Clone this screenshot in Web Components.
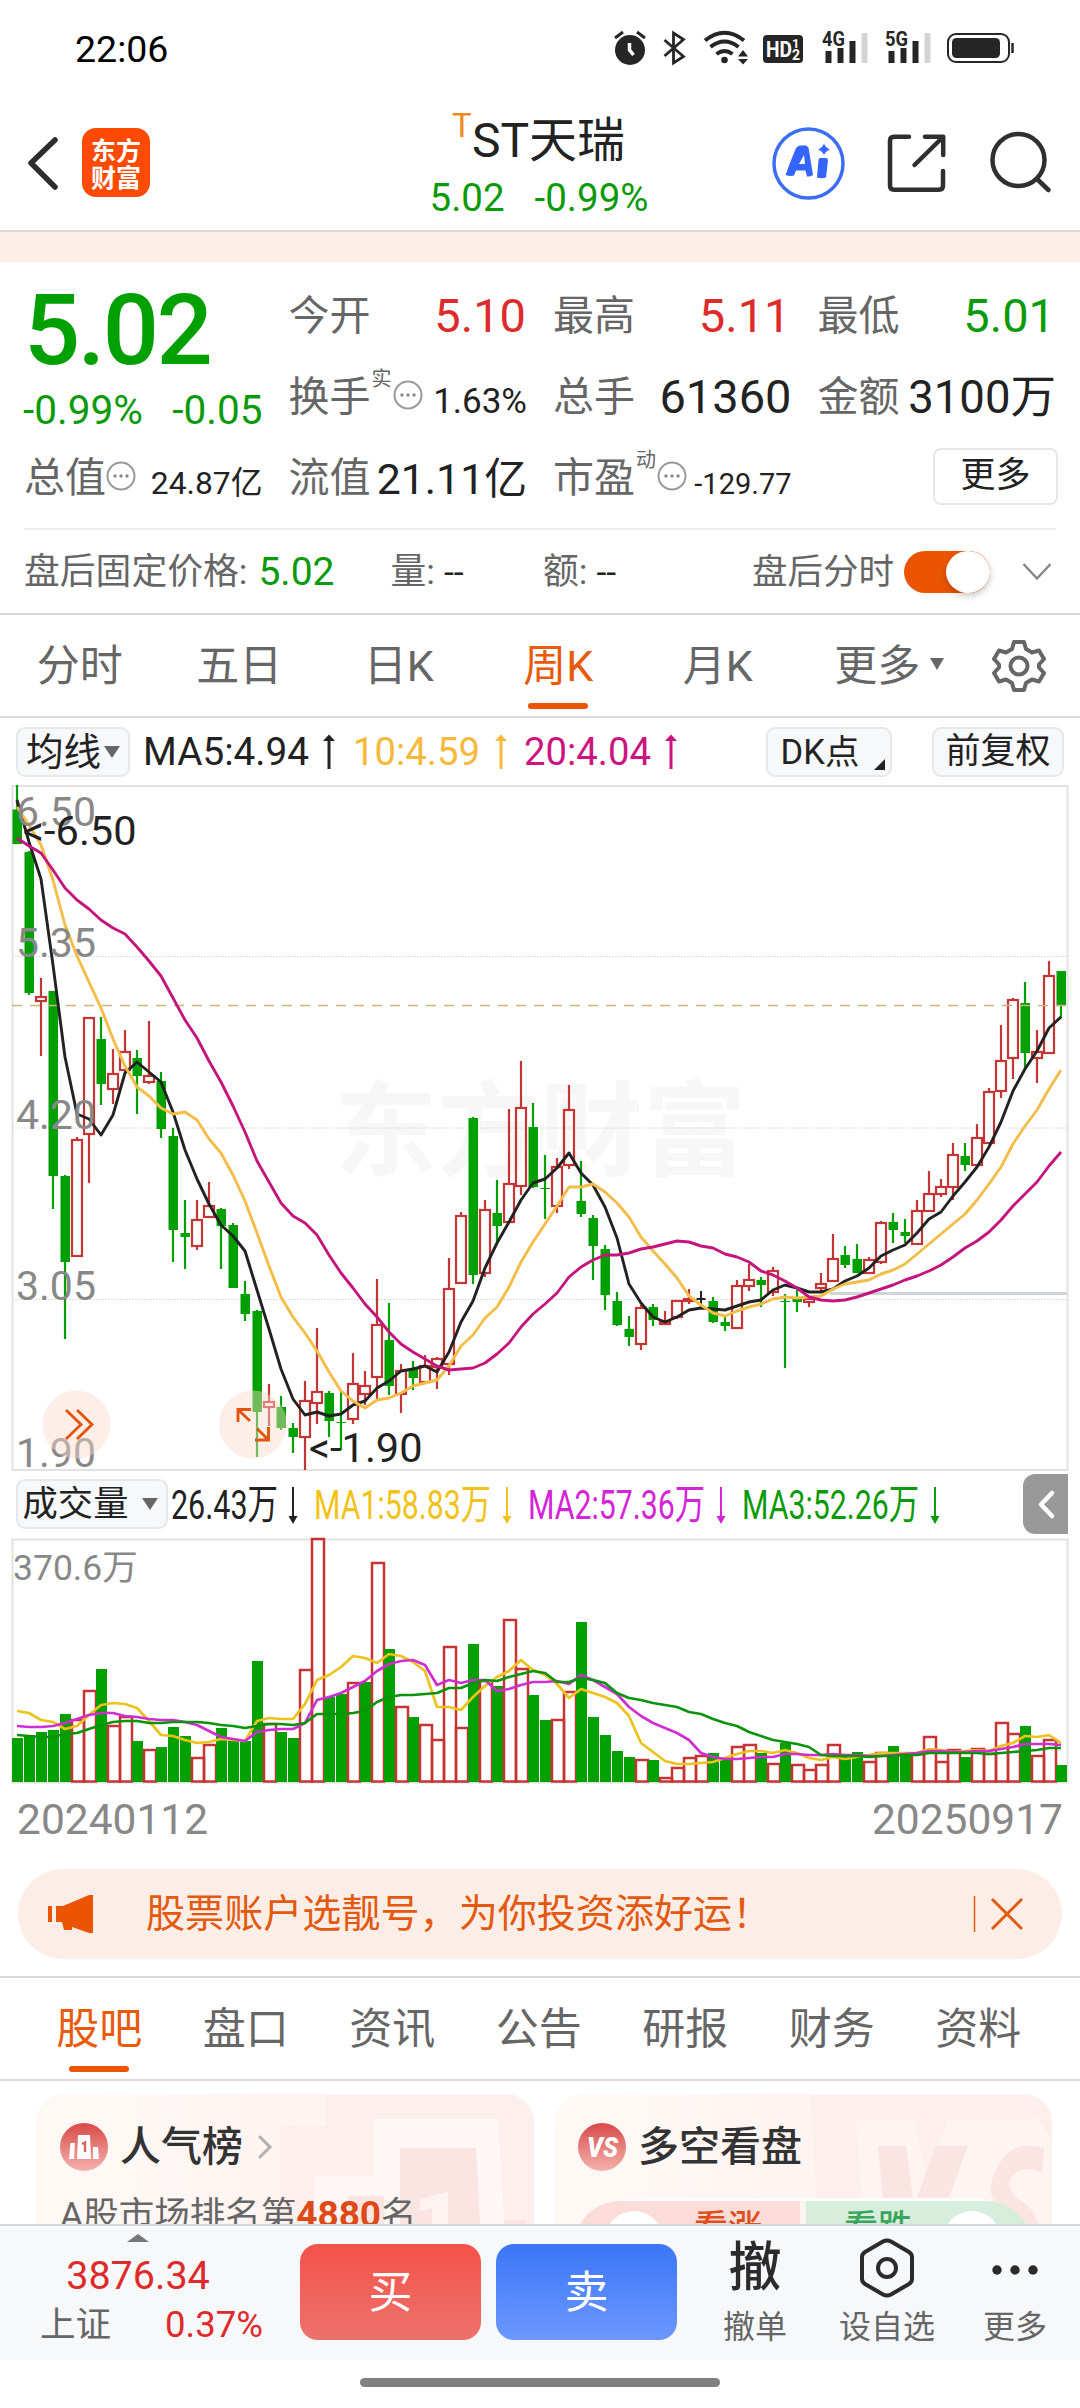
<!DOCTYPE html>
<html lang="zh-CN">
<head>
<meta charset="utf-8">
<title>ST天瑞</title>
<style>
    body {
        margin: 0;
        width: 1080px;
        height: 2408px;
        overflow: hidden;
        background: #fff;
        color: #222;
        font-family: Roboto, "Noto Sans CJK SC", sans-serif;
    }
</style>
</head>
<body>
<stock-app></stock-app>

<script>
//small helper: every component clones its own template
function define(name, html, setup) {
    const template = document.createElement("template")
    template.innerHTML = html
    customElements.define(name, class extends HTMLElement {
        constructor() {
            super();
            this.attachShadow({mode: "open"})
            this.shadowRoot.append(template.content.cloneNode(true))
        }
        connectedCallback() {
            if (setup) setup(this, this.shadowRoot);
        }
    })
}

//#region HEADER
define("status-bar", /*html*/`
    <style>
    :host { display: flex; height: 98px; box-sizing: border-box; padding: 0 64px 0 75px; align-items: center; justify-content: space-between; color: #000; font-size: 37.5px; line-height: 44px; }
    svg { display: block; overflow: visible; }
    </style>
    <span>22:06</span>
    <svg width="405" height="40" viewBox="612 29 405 40" fill="none" stroke="#262626">
      <circle cx="631" cy="50" r="15" fill="#262626" stroke="none"/>
      <path d="M616 38l8-6M646 38l-8-6" stroke-width="3"/>
      <path d="M630.500 43v7l4 5" stroke="#fff" stroke-width="3.500"/>
      <path d="M665.500 40L684.500 56.500 674.500 63V33L684.500 39.500 665.500 56" stroke-width="2.800"/>
      <path d="M706 40.500q19.500-15.500 39 0M711.500 47q14-11 28 0M717.500 54q8-6 16 0" stroke-width="4"/>
      <circle cx="725.500" cy="60" r="3.300" fill="#262626" stroke="none"/>
      <path d="M739 56.500l5-6.500 5 6.500zM739 59h10l-5 5.500z" fill="#262626" stroke="none"/>
      <rect x="764" y="35" width="40" height="28" rx="4" fill="#262626" stroke="none"/>
      <g fill="#fff" stroke="none" font-family="Roboto" font-weight="700">
        <text x="767" y="57" font-size="22" textLength="26" lengthAdjust="spacingAndGlyphs">HD</text>
        <text x="793" y="48" font-size="13" textLength="7">1</text><text x="793" y="60" font-size="14">2</text>
      </g>
      <g fill="#262626" stroke="none" font-family="Roboto" font-weight="700" font-size="20">
        <text x="823" y="46" textLength="23" lengthAdjust="spacingAndGlyphs">4G</text>
        <text x="886" y="46" textLength="23" lengthAdjust="spacingAndGlyphs">5G</text>
      </g>
      <g fill="#262626" stroke="none">
        <path d="M826.500 51h6v12h-6zM838.500 48h6v15h-6zM850.500 41h6v22h-6zM889.500 51h6v12h-6zM901.500 48h6v15h-6zM913.500 41h6v22h-6z"/>
        <path d="M862.500 33h6v30h-6zM925.500 33h6v30h-6z" fill="#d4d4d4"/>
      </g>
      <rect x="949" y="34" width="61" height="28" rx="8" stroke-width="2"/>
      <rect x="953" y="38" width="48" height="20" rx="4.500" fill="#262626" stroke="none"/>
      <path d="M1013.500 43v10" stroke-width="2.500"/>
    </svg>
`)

define("stock-header", /*html*/`
    <style>
    :host { display: grid; grid-template-columns: 400px 1fr 400px; height: 132px; border-bottom: 2px solid #d9d9d9; box-sizing: border-box; margin-top: 2px; }
    .left, .right { display: flex; align-items: center; }
    .left { padding: 0 0 5px 26px; gap: 22px; }
    .logo { width: 68px; height: 69px; border-radius: 14px; background: #ff4a03; color: #fff; font: 700 25px/27px "Noto Sans CJK SC", sans-serif; display: flex; align-items: center; justify-content: center; text-align: center; }
    .title { display: flex; flex-direction: column; align-items: center; }
    .name { display: flex; white-space: nowrap; font-size: 48px; line-height: 56px; margin-top: 13px; margin-left: -3px; }
    sup { font-size: 33px; line-height: 34px; color: #ef8a1d; margin-top: -4px; width: 20px; }
    .price { display: flex; gap: 30px; font-size: 38.500px; line-height: 46px; margin-top: 6px; margin-left: -2px; color: #0a9a0a; white-space: nowrap; }
    </style>
    <div class="left">
      <svg width="34" height="54" fill="none" stroke="#2d2d2d" stroke-width="5.500" stroke-linecap="round" stroke-linejoin="round"><path d="M29 4L5 27l24 24"/></svg>
      <div class="logo">东方<br>财富</div>
    </div>
    <div class="title">
      <div class="name"><sup>T</sup>ST天瑞</div>
      <div class="price"><span>5.02</span><span>-0.99%</span></div>
    </div>
    <svg class="right" width="400" height="127" viewBox="680 100 400 127" fill="none">
      <circle cx="808.500" cy="163.500" r="34.500" stroke="#3d6df2" stroke-width="3.500"/>
      <g fill="#3565ff">
        <path d="M785.500 175q5-14 10.500-27 2-2.500 4-2.500h6l2.500 2 4.500 27.500q-3 2-6 1.500l-1.500-6h-9.500l-2 5q-4 1-8.500-.5zM799 164h6l-1-9z" fill-rule="evenodd"/>
        <path d="M818.500 160q0-2 2-2h5q2.500 0 2.500 2l-2 17.500q-5 1.500-9 0z"/>
        <path d="M824 143.500q1.500 4 6 6-4.500 1.500-6 5.500-1.500-4-6-5.500 4.500-2 6-6z"/>
      </g>
      <g stroke="#2f2f2f" stroke-width="4.500" stroke-linecap="round" stroke-linejoin="round">
        <path d="M909 136.800h-15q-4 0-4 4v45q0 4 4 4h45q4 0 4-4V171M925 136.800h18.200V155M942 138L914.500 165"/>
        <circle cx="1018.500" cy="160" r="26"/><path d="M1037 179l11.500 11"/>
      </g>
    </svg>
`)
//#endregion HEADER

//#region QUOTE
define("quote-cell", /*html*/`
    <style>
    :host { display: flex; height: 81px; align-items: center; justify-content: space-between; white-space: nowrap; font-size: 47px; line-height: 1.2; color: #222; }
    .label { display: flex; align-items: center; font-size: 41px; color: #666; }
    .mark { align-self: flex-start; font-size: 20px; line-height: 24px; margin-top: -18px; width: 22px; padding-left: 1px; box-sizing: border-box; }
    svg { display: none; margin-top: -5px; }
    :host([info]) svg { display: block; }
    .tip { display: flex; width: 0; }
    :host([info]) .tip { width: 52px; }
    :host([info]:not([mark])) .tip { width: 31px; }
    </style>
    <span class="label"><slot name="label"></slot><span class="tip"><span class="mark"></span><svg width="30" height="30" fill="none" stroke="#999" stroke-width="2"><circle cx="15" cy="15" r="13.500"/><g fill="#888" stroke="none"><circle cx="9" cy="15" r="1.700"/><circle cx="15" cy="15" r="1.700"/><circle cx="21" cy="15" r="1.700"/></g></svg></span></span>
    <span><slot></slot></span>
`, (el, root) => {
    const mark = root.querySelector(".mark")
    if (el.hasAttribute("mark")) mark.textContent = el.getAttribute("mark")
    else mark.remove()
})

define("quote-panel", /*html*/`
    <style>
    :host { display: block; height: 383px; border-bottom: 2px solid #d9d9d9; box-sizing: border-box; border-top: 30px solid #fceee6; }
    .grid { display: grid; grid-template-columns: repeat(4, 238.500px); column-gap: 26px; grid-template-rows: repeat(3, 81px); margin: 0 24px; padding: 14px 0 9px; border-bottom: 2px solid #ececec; height: 243px; }
    .last { grid-row: span 2; color: #0a9a0a; }
    .last b { display: block; font-weight: 500; font-size: 99px; line-height: 108px; letter-spacing: -2.500px; color: #00a000; }
    .last div { display: flex; justify-content: space-between; font-size: 40.500px; line-height: 46px; margin-top: 3px; margin-left: -1px; white-space: nowrap; }
    .up { --c: #dd2b2b; } .down { --c: #0a9a0a; }
    .up, .down { color: var(--c); margin-right: 1px; }
    .more { justify-self: end; align-self: center; width: 121px; height: 53px; border: 2px solid #e6e6e6; border-radius: 8px; font-size: 35px; line-height: 52px; text-align: center; margin: 0 -2px 4px 0; }
    .after { display: flex; align-items: center; height: 84px; margin: 0 24px; font-size: 35.800px; line-height: 44px; color: #666; white-space: nowrap; padding-right: 4px; }
    .after .down { font-size: 39px; margin: 0 56px 0 11px; }
    .after i { font-style: normal; color: #222; width: 90px; padding-left: 9px; }
    .after .r { margin-left: auto; font-size: 35.500px; }
    .switch { width: 86px; height: 42px; border-radius: 21px; background: #eb5502; display: flex; justify-content: flex-end; margin: 0 32px 0 10px; }
    .switch::after { content: ""; width: 44px; height: 42px; border-radius: 50%; background: #fff; box-shadow: 0 3px 7px rgba(0,0,0,.22); }
    </style>
    <div class="grid">
      <div class="last"><b>5.02</b><div><span>-0.99%</span><span>-0.05</span></div></div>
      <quote-cell><span slot="label">今开</span><span class="up">5.10</span></quote-cell>
      <quote-cell><span slot="label">最高</span><span class="up">5.11</span></quote-cell>
      <quote-cell><span slot="label">最低</span><span class="down">5.01</span></quote-cell>
      <quote-cell info mark="实"><span slot="label">换手</span><span style="font-size:35px">1.63%</span></quote-cell>
      <quote-cell><span slot="label">总手</span><span>61360</span></quote-cell>
      <quote-cell><span slot="label">金额</span><span style="font-size:45.500px">3100万</span></quote-cell>
      <quote-cell info><span slot="label">总值</span><span style="font-size:31.800px">24.87亿</span></quote-cell>
      <quote-cell><span slot="label">流值</span><span style="font-size:42.800px">21.11亿</span></quote-cell>
      <quote-cell info mark="动"><span slot="label">市盈</span><span style="font-size:29px">-129.77</span></quote-cell>
      <div class="more">更多</div>
    </div>
    <div class="after">
      <span>盘后固定价格:</span><span class="down">5.02</span>
      <span>量:</span><i>--</i><span style="margin-left:9px">额:</span><i>--</i>
      <span class="r">盘后分时</span><span class="switch"></span>
      <svg width="30" height="20" fill="none" stroke="#888" stroke-width="2.500"><path d="M1.500 2L15 16.500 28.500 2"/></svg>
    </div>
`)
//#endregion QUOTE

//#region TABS
define("tab-item", /*html*/`
    <style>
    :host { display: flex; flex: none; width: var(--tab, 160px); align-items: center; justify-content: center; position: relative; font-size: 43px; color: #666; white-space: nowrap; }
    :host([active]) { color: #e85a0c; }
    :host([active])::after { content: ""; position: absolute; bottom: 7px; left: calc(50% - 30px); width: 60px; height: 6px; border-radius: 3px; background: #eb5502; }
    </style>
    <slot></slot>
`)

define("tab-strip", /*html*/`
    <style>
    :host { display: flex; height: 103px; box-sizing: border-box; border-bottom: 2px solid #d9d9d9; line-height: 60px; }
    </style>
    <slot></slot>
`)
//#endregion TABS

//#region CHARTS
define("chip-button", /*html*/`
    <style>
    :host { display: flex; box-sizing: border-box; height: 50px; border: 2px solid #e6e8ea; border-radius: 9px; background: #f7f8fa; align-items: center; justify-content: center; font-size: 37px; line-height: 44px; white-space: nowrap; position: relative; }
    :host([arrow])::after { content: ""; border: solid transparent; border-width: 12px 8px 0; border-top-color: #666; margin-left: var(--gap, 4px); }
    :host([corner])::after { content: ""; position: absolute; right: 5px; bottom: 5px; border-bottom: 11px solid #222; border-left: 11px solid transparent; }
    </style>
    <slot></slot>
`)

define("ma-legend", /*html*/`
    <style>
    :host { display: flex; height: 67px; padding: 0 16px; align-items: center; box-sizing: border-box; }
    svg { display: block; flex: 1; height: 66px; }
    </style>
    <chip-button arrow style="width:114px;font-size:37.500px;--gap:3px">均线</chip-button>
    <svg viewBox="130 0 636 66" preserveAspectRatio="xMinYMid" font-size="38" font-family="Roboto"></svg>
    <chip-button corner style="width:126px;margin-right:40px;padding-right:18px;font-size:34.500px">DK点</chip-button>
    <chip-button style="width:132px;font-size:35px">前复权</chip-button>
`, (el, root) => {
    root.querySelector("svg").innerHTML = [
        ["MA5:4.94", 143, 166, 329, "#222"],
        ["10:4.59", 353, 127, 501, "#f6b93b"],
        ["20:4.04", 524, 127, 671, "#cc1480"]
    ].map(([t, x, w, a, c]) => `<g fill="${c}"><text x="${x}" y="46" textLength="${w}" lengthAdjust="spacingAndGlyphs">${t}</text><path d="M${a - 1.5} 50V22h-4.500l6-6.500 6 6.500h-4.500V50z"/></g>`).join("")
})

define("volume-legend", /*html*/`
    <style>
    :host { display: flex; height: 66px; padding: 0 12px 0 16px; align-items: center; box-sizing: border-box; }
    svg { display: block; }
    .lines { flex: 1; height: 66px; }
    .fold { width: 45px; height: 60px; background: #999; border-radius: 12px 0 0 12px; margin-bottom: 1px; }
    </style>
    <chip-button arrow style="width:152px;font-size:35.300px;padding-right:3px;--gap:14px">成交量</chip-button>
    <svg class="lines" viewBox="168 0 855 66" font-size="41" font-family='Roboto, "Noto Sans CJK SC"'></svg>
    <svg class="fold" viewBox="0 0 45 60" fill="none" stroke="#fff" stroke-width="4.500" stroke-linecap="round" stroke-linejoin="round"><path d="M29 19L18 30.500 29 42"/></svg>
`, (el, root) => {
    root.querySelector("svg").innerHTML = [
        ["26.43万", 171, 107, 293, "#222"],
        ["MA1:58.83万", 314, 177, 507, "#f2c21a"],
        ["MA2:57.36万", 528, 177, 721, "#d424d8"],
        ["MA3:52.26万", 742, 177, 935, "#0a9a0a"]
    ].map(([t, x, w, a, c]) => `<g fill="${c}"><text x="${x}" y="48" textLength="${w}" lengthAdjust="spacingAndGlyphs">${t}</text><path d="M${a - 1} 16v29h-3.500l4.500 8 4.500-8h-3.500V16z"/></g>`).join("")
})

const RED = "#c63535", GREEN = "#00a000"
const centre = i => 17 + i * 12
const polyline = (ys, colour, width) => `<polyline points="${ys.map((y, i) => centre(i) + "," + y).join(" ")}" stroke="${colour}" stroke-width="${width}" fill="none" stroke-linejoin="round"/>`

//one entry per week: direction, high, low, body top, body bottom
const candles = `
G 785 844 809.5 844|G 851 995 852 993|R 978 1056 997 1001|G 991 1209 991 1176|G 1175 1339 1176 1262|R 1137 1257 1140 1256|R 1017 1183 1018 1134|G 1017 1105 1039 1084
R 1049 1104 1074 1089|R 1030 1072 1052 1070|G 1050 1114 1058 1076|R 1021 1084 1076 1082|G 1072 1138 1081 1129|G 1128 1262 1136 1230|G 1200 1269 1233 1237|R 1200 1250 1220 1246
R 1182 1218 1206 1217|G 1208 1269 1209 1226|G 1223 1288 1225 1288|G 1281 1321 1294 1314|G 1310 1457 1311 1412|R 1384 1426 1402 1407|G 1396 1430 1407 1428|G 1423 1453 1428 1437
R 1381 1470 1401 1437|R 1328 1424 1392 1403|G 1391 1437 1393 1421|G 1391 1450 1422 1423|R 1353 1424 1384 1419|R 1371 1405 1386 1394|R 1279 1399 1325 1377|G 1303 1395 1340 1386
R 1364 1413 1371 1394|G 1361 1390 1369 1378|R 1355 1384 1366 1382|R 1357 1389 1359 1367|R 1258 1375 1289 1364|R 1212 1283 1216 1283|G 1117 1284 1118 1275|R 1200 1277 1210 1273
G 1180 1242 1213 1226|R 1109 1222 1184 1222|R 1061 1195 1108 1186|G 1103 1188 1127 1187|G 1155 1219 1188 1189|R 1158 1213 1167 1206|R 1085 1169 1110 1165|G 1161 1217 1201 1214
G 1215 1280 1218 1246|G 1245 1310 1249 1295|G 1292 1326 1301 1325|G 1316 1346 1329 1337|R 1305 1350 1308 1344|G 1304 1326 1307 1320|R 1311 1324 1322 1324|R 1300 1319 1301 1317
R 1289 1304 1299 1301|K 1291 1308 1299 1300|G 1297 1323 1301 1322|G 1315 1331 1322 1326|R 1280 1328 1286 1328|R 1264 1291 1280 1286|G 1277 1307 1280 1285|R 1267 1296 1271 1292
G 1294 1368 1301 1302|G 1290 1312 1298 1302|R 1296 1307 1299 1302|R 1273 1292 1284 1288|R 1234 1282 1259 1281|G 1246 1268 1255 1265|G 1244 1273 1259 1273|R 1257 1273 1260 1273
R 1221 1264 1223 1262|G 1213 1243 1222 1230|G 1219 1243 1232 1236|R 1200 1245 1211 1244|R 1171 1212 1194 1211|R 1179 1197 1187 1194|R 1143 1200 1155 1187|G 1143 1171 1156 1165
R 1124 1166 1138 1165|R 1088 1143 1092 1143|R 1025 1098 1061 1091|R 998 1079 1000 1058|G 982 1069 1003 1053|R 1030 1083 1052 1058|R 961 1053 976 1053|G 971 1018 971 1005
`.trim().split(/[|\n]/).map(row => row.split(" ").map((v, i) => i ? +v : v))

const ma5 = [800, 842, 879, 965, 1057, 1114, 1119, 1135, 1115, 1073, 1062, 1072, 1082, 1112, 1150, 1179, 1204, 1225, 1236, 1251, 1290, 1329, 1369, 1399, 1415, 1412, 1416, 1414, 1405, 1401, 1388, 1381, 1371, 1369, 1366, 1372, 1352, 1322, 1301, 1268, 1243, 1222, 1200, 1183, 1179, 1168, 1153, 1173, 1185, 1207, 1238, 1284, 1303, 1317, 1322, 1317, 1310, 1308, 1309, 1310, 1306, 1302, 1300, 1290, 1285, 1288, 1292, 1292, 1289, 1281, 1276, 1268, 1256, 1250, 1245, 1233, 1219, 1212, 1196, 1182, 1167, 1147, 1122, 1091, 1069, 1051, 1028, 1017]
const ma10 = [807, 825, 845, 880, 925, 956, 982, 1008, 1039, 1066, 1087, 1096, 1108, 1114, 1112, 1120, 1139, 1153, 1175, 1201, 1233, 1266, 1297, 1317, 1333, 1351, 1372, 1391, 1401, 1408, 1400, 1398, 1393, 1386, 1383, 1380, 1366, 1346, 1335, 1318, 1307, 1287, 1262, 1242, 1224, 1206, 1187, 1187, 1184, 1192, 1203, 1217, 1237, 1251, 1264, 1278, 1296, 1305, 1313, 1316, 1311, 1307, 1304, 1299, 1297, 1298, 1297, 1296, 1289, 1284, 1282, 1280, 1274, 1270, 1264, 1254, 1244, 1234, 1224, 1214, 1200, 1184, 1167, 1144, 1126, 1110, 1089, 1070]
const ma20 = [838, 846, 853, 870, 888, 900, 909, 920, 928, 934, 947, 961, 976, 998, 1020, 1038, 1061, 1082, 1106, 1132, 1161, 1182, 1203, 1216, 1223, 1235, 1255, 1273, 1288, 1304, 1317, 1332, 1344, 1352, 1359, 1366, 1370, 1369, 1368, 1363, 1354, 1343, 1327, 1314, 1304, 1293, 1277, 1267, 1260, 1255, 1255, 1253, 1249, 1247, 1244, 1241, 1242, 1246, 1248, 1254, 1257, 1262, 1271, 1275, 1281, 1288, 1297, 1300, 1301, 1300, 1297, 1293, 1289, 1285, 1280, 1276, 1271, 1265, 1257, 1248, 1241, 1232, 1220, 1206, 1194, 1182, 1166, 1152]

function drawCandle([dir, high, low, top, bottom], i) {
    const x = centre(i), h = bottom - top
    if (dir === "K") return `<path d="M${x} ${high}V${low}M${x - 4.5} ${top}h9" stroke="#222" stroke-width="2"/>`
    if (dir === "G") return `<path d="M${x} ${high}V${low}" stroke="${GREEN}" stroke-width="2.200"/><rect x="${x - 4.5}" y="${top}" width="9.500" height="${h}" fill="${GREEN}"/>`
    return `<path d="M${x} ${high}V${top}M${x} ${bottom}V${low}" stroke="${RED}" stroke-width="2.200"/><rect x="${x - 5}" y="${top}" width="10" height="${h}" fill="none" stroke="${RED}" stroke-width="2.200"/>`
}

define("candle-chart", /*html*/`
    <style>
    :host { display: block; height: 686px; }
    svg { display: block; overflow: visible; }
    </style>
    <svg width="1080" height="686" viewBox="0 785 1080 686" font-family="Roboto"></svg>
`, (el, root) => {
    const scale = [["6.50", 826], ["5.35", 957], ["4.20", 1128.5], ["3.05", 1299.5], ["1.90", 1466.5]]
    root.querySelector("svg").innerHTML = `
        <text x="334" y="1168" font-size="103" font-weight="700" font-family="Noto Sans CJK SC" fill="#f7f7f7">东方财富</text>
        <path d="M12 956.500H1067M12 1128H1067M12 1299.500H1067" stroke="#d2d2d2" stroke-dasharray="1.500 1.500"/>
        <path d="M12.500 786H1067.500V1470H12.500z" stroke="#e2e2e2" stroke-width="2" fill="none"/>
        <path d="M830 1293.500H1067" stroke="#d0d4d8" stroke-width="3"/>
        ${candles.map(drawCandle).join("")}
        <path d="M12 1005.500H1067" stroke="#cdb27c" stroke-width="1.500" stroke-dasharray="10 8"/>
        ${polyline(ma5, "#222", 2.9)}${polyline(ma10, "#f4bc48", 2.9)}${polyline(ma20, "#c4157c", 2.9)}
        <g font-size="41" fill="#888">${scale.map(([t, y]) => `<text x="16" y="${y}">${t}</text>`).join("")}</g>
        <g font-size="41.500" fill="#222"><text x="23" y="845">&lt;-6.50</text><text x="309" y="1461.500">&lt;-1.90</text></g>
        <g fill="#fbdccb" fill-opacity=".45"><circle cx="76.500" cy="1424.500" r="34"/><circle cx="253" cy="1424.500" r="34"/></g>
        <path d="M66 1410l15 14.500L66 1439M77 1410l15 14.500L77 1439M251 1409.500H238V1422M238 1409.500L250 1421M255 1440H268.500V1427M268.500 1440L257 1428.500" stroke="#e25510" stroke-width="2.900" fill="none"/>`
})

const volumeTops = [1738, 1735, 1732, 1730, 1714, 1719, 1690, 1669, 1725, 1716, 1741, 1749, 1747, 1727, 1736, 1757, 1744, 1728, 1740, 1741, 1661, 1723, 1732, 1738, 1669, 1538, 1697, 1694, 1682, 1682, 1562, 1649, 1706, 1717, 1724, 1739, 1646, 1727, 1644, 1680, 1686, 1619, 1668, 1695, 1720, 1719, 1691, 1622, 1717, 1735, 1751, 1757, 1759, 1760, 1777, 1767, 1757, 1755, 1753, 1760, 1746, 1744, 1753, 1763, 1743, 1764, 1769, 1764, 1744, 1755, 1752, 1761, 1752, 1746, 1756, 1753, 1736, 1761, 1749, 1757, 1748, 1753, 1722, 1733, 1726, 1755, 1739, 1765]
const vma1 = [1711, 1713, 1720, 1722, 1729, 1726, 1715, 1705, 1703, 1704, 1708, 1721, 1735, 1736, 1740, 1743, 1742, 1739, 1740, 1741, 1721, 1718, 1719, 1719, 1704, 1680, 1675, 1667, 1656, 1658, 1663, 1654, 1656, 1662, 1671, 1707, 1707, 1710, 1697, 1686, 1677, 1671, 1660, 1670, 1675, 1684, 1698, 1689, 1693, 1697, 1703, 1716, 1743, 1752, 1761, 1764, 1764, 1763, 1762, 1758, 1754, 1751, 1751, 1753, 1750, 1753, 1758, 1760, 1757, 1759, 1757, 1755, 1753, 1753, 1753, 1753, 1749, 1750, 1752, 1751, 1750, 1751, 1746, 1743, 1736, 1737, 1735, 1743]
const vma2 = [1726, 1727, 1727, 1726, 1723, 1719, 1715, 1713, 1713, 1716, 1717, 1719, 1720, 1720, 1722, 1725, 1731, 1737, 1739, 1741, 1732, 1730, 1729, 1729, 1723, 1700, 1697, 1693, 1687, 1681, 1671, 1664, 1661, 1660, 1665, 1685, 1680, 1683, 1680, 1680, 1691, 1689, 1685, 1682, 1682, 1681, 1684, 1675, 1680, 1687, 1694, 1707, 1716, 1723, 1728, 1733, 1740, 1753, 1757, 1759, 1759, 1758, 1757, 1757, 1754, 1754, 1755, 1755, 1754, 1755, 1755, 1756, 1756, 1755, 1754, 1753, 1751, 1751, 1752, 1752, 1751, 1751, 1749, 1747, 1744, 1744, 1744, 1745]
const vma3 = [1735, 1736, 1737, 1737, 1734, 1733, 1729, 1725, 1722, 1721, 1721, 1723, 1723, 1722, 1722, 1722, 1723, 1725, 1726, 1728, 1726, 1724, 1724, 1725, 1723, 1714, 1714, 1714, 1713, 1711, 1702, 1697, 1695, 1695, 1694, 1693, 1688, 1688, 1683, 1680, 1681, 1677, 1674, 1671, 1673, 1682, 1682, 1678, 1680, 1683, 1693, 1698, 1700, 1703, 1705, 1707, 1712, 1714, 1719, 1723, 1726, 1732, 1736, 1740, 1742, 1744, 1747, 1755, 1756, 1756, 1756, 1757, 1756, 1756, 1755, 1755, 1753, 1753, 1753, 1753, 1753, 1754, 1753, 1752, 1751, 1750, 1748, 1748]
//weeks whose volume bar has the other colour than the candle
const flipped = {2: "G", 29: "G", 65: "R"}

define("volume-chart", /*html*/`
    <style>
    :host { display: block; height: 313px; font-size: 42.500px; color: #888; }
    svg { display: block; }
    footer { display: flex; justify-content: space-between; padding: 11px 17px 0; line-height: 48px; }
    </style>
    <svg width="1080" height="248" viewBox="0 1537 1080 248"></svg>
    <footer><span>20240112</span><span>20250917</span></footer>
`, (el, root) => {
    root.querySelector("svg").innerHTML = `
        <path d="M12.500 1539.500H1067.500V1782.500H12.500z" stroke="#e2e2e2" stroke-width="2" fill="none"/>
        <text x="13" y="1580" font-size="35.500" fill="#888">370.6万</text>
        ${volumeTops.map((y, i) => (flipped[i] || candles[i][0]) === "G"
            ? `<rect x="${centre(i) - 5}" y="${y}" width="11" height="${1782 - y}" fill="${GREEN}"/>`
            : `<rect x="${centre(i) - 5}" y="${y + 1}" width="12" height="${1780.5 - y}" fill="none" stroke="${RED}" stroke-width="2.500"/>`).join("")}
        ${polyline(vma1, "#ecc21c", 2.7)}${polyline(vma2, "#cf2fd0", 2.7)}${polyline(vma3, "#0c930c", 2.7)}`
})
//#endregion CHARTS

//#region FEED
define("promo-banner", /*html*/`
    <style>
    :host { display: flex; box-sizing: border-box; height: 90px; margin: 19px 18px 17px; border-radius: 45px; background: #fceee6; color: #e2590f; align-items: center; font-size: 39.100px; line-height: 50px; padding: 0 39px 0 30px; white-space: nowrap; }
    span { flex: 1; padding-left: 52px; padding-bottom: 1px; }
    </style>
    <svg width="46" height="42" fill="#eb5502"><path d="M0 13h4v16H0zM8 13h7L41 2h4v38h-4l-17-6v3h-8l-2-8H8z"/></svg>
    <span><slot></slot></span>
    <svg width="50" height="38" stroke="#e2590f" fill="none" stroke-width="3"><path d="M1.500 1v36" stroke-width="1.500"/><path d="M19 4l30 30M49 4L19 34"/></svg>
`)

define("feature-card", /*html*/`
    <style>
    :host { display: block; width: 498px; height: 160px; border-radius: 28px; background: linear-gradient(90deg, #fff9f6, #fdf0ee); position: relative; overflow: hidden; }
    header { display: flex; align-items: center; position: relative; padding: 24px 0 0 24px; font-size: 41px; line-height: 58px; font-weight: 500; color: #333; }
    ::slotted(div) { position: relative; }
    </style>
    <slot name="bg"></slot>
    <header><slot name="icon"></slot><slot name="title"></slot></header>
    <slot></slot>
`)

define("feed-cards", /*html*/`
    <style>
    :host { display: flex; gap: 20px; padding: 13px 28px 0 36px; height: 130px; overflow: hidden; }
    .bg { position: absolute; inset: 0; }
    .icon { margin-right: 12px; }
    .next { margin-left: 4px; }
    .rank { font-size: 35.500px; line-height: 44px; color: #666; padding: 17px 0 0 24px; white-space: nowrap; }
    .rank b { color: #dc4a18; font-size: 37px; }
    .vote { display: flex; justify-content: center; gap: 6px; margin: 22px 31px 0; border: 3px solid #fffdfc; border-bottom: 0; border-radius: 50px 50px 0 0; height: 70px; font-size: 34px; font-weight: 500; line-height: 52px; white-space: nowrap; }
    .vote span { flex: 1; display: flex; align-items: flex-start; }
    .bull { background: #fcdcd9; color: #e04d18; border-radius: 46px 0 0 0; justify-content: flex-end; padding-right: 38px; }
    .bear { background: #d6eedb; color: #3ca55c; border-radius: 0 46px 0 0; padding-left: 38px; }
    .vote i { flex: none; width: 58px; height: 58px; border-radius: 50%; background: #fff; margin: 10px 31px 0; }
    </style>
    <feature-card>
      <svg slot="bg" class="bg" width="498" height="160"><path d="M290 0H498V160H244V32h46z" fill="#fdefed"/><path d="M278 160V82h60V25h124l8 135z" fill="#fff7f5"/><path d="M312 102h36v58h-36zM364 54h76l6 106h-82z" fill="#fbe5e3"/><path d="M384 105l28-7v62h-16v-46l-12 3z" fill="#fff3f1"/><path d="M468 126h22v34h-22z" fill="#fbe5e3"/></svg>
      <svg slot="icon" class="icon" width="48" height="58" viewBox="0 -5 48 58"><defs><linearGradient id="g" x2="0" y2="1"><stop stop-color="#d84a48"/><stop offset="1" stop-color="#f4b3ae"/></linearGradient></defs><circle cx="24" cy="24" r="24" fill="url(#g)"/><path d="M10.500 20h4.500l-1 16H9zM18 12h12l1 24H17zM33 24h5l1 12h-6z" fill="#fff"/><path d="M22 21l3-1.500V29" stroke="#dd6663" stroke-width="2.500" fill="none"/></svg>
      <span slot="title">人气榜 <svg class="next" width="16" height="28" fill="none" stroke="#b5b0ae" stroke-width="3" stroke-linecap="round"><path d="M3 4l10 10L3 24"/></svg></span>
      <div class="rank">A股市场排名第<b>4880</b>名</div>
    </feature-card>
    <feature-card>
      <svg slot="bg" class="bg" width="498" height="160"><path d="M256 0H498V160H266z" fill="#fdefed"/><path d="M302 25h58l12 60 22-60h90q20 24 14 50v85H312z" fill="#fef4f2"/><path d="M324 52h28l8 60 22-60h32l-40 108h-40zM488 78q-24-8-32 8-4 12 18 26 16 14 10 48h-46l4-24 18 4q4-8-10-20-20-18-10-40 14-36 50-26z" fill="#fbe5e3"/></svg>
      <svg slot="icon" class="icon" width="48" height="58" viewBox="0 -5 48 58"><defs><linearGradient id="g2" x2="0" y2="1"><stop stop-color="#d84a48"/><stop offset="1" stop-color="#f4b3ae"/></linearGradient></defs><circle cx="24" cy="24" r="24" fill="url(#g2)"/><text x="9" y="34" font-size="27" font-weight="900" font-style="italic" fill="#fff" textLength="31" lengthAdjust="spacingAndGlyphs">VS</text></svg>
      <span slot="title">多空看盘</span>
      <div class="vote"><span class="bull"><i></i>看涨</span><span class="bear">看跌<i></i></span></div>
    </feature-card>
`)
//#endregion FEED

//#region TRADE BAR
define("tool-button", /*html*/`
    <style>
    :host { display: flex; flex-direction: column; align-items: center; width: 132px; font-size: 32px; line-height: 40px; color: #666; white-space: nowrap; }
    .icon { height: 84px; display: flex; align-items: center; color: #2b2b2b; margin-bottom: -3px; }
    </style>
    <span class="icon"><slot name="icon"></slot></span>
    <slot></slot>
`)

define("trade-bar", /*html*/`
    <style>
    :host { display: block; height: 184px; background: #fff; }
    .bar { display: flex; box-sizing: border-box; height: 136px; border-top: 2px solid #d6d8dc; background: #f7f8fa; }
    .index { width: 276px; display: flex; flex-direction: column; align-items: center; color: #dd2b2b; font-size: 39.500px; }
    .index::before { content: ""; border: solid transparent; border-width: 0 11px 8px; border-bottom-color: #777; margin-top: 8px; }
    .index b { font-weight: 400; line-height: 46px; margin-top: 11px; }
    .index div { display: flex; width: 223px; justify-content: space-between; font-size: 36.500px; line-height: 44px; margin: 4px 0 0 27px; }
    .index i { font-style: normal; font-size: 35.500px; color: #666; }
    button { all: unset; width: 181px; height: 96px; border-radius: 18px; margin: 18px 15px 0 0; text-align: center; color: #fff; font-size: 44px; line-height: 98px; }
    .buy { background: linear-gradient(#f4524a, #ec726b); margin-left: 24px; }
    .sell { background: linear-gradient(#3b76f8, #6c98fe); }
    .tools { display: flex; margin: 0 0 0 -3px; }
    .home { width: 360px; height: 9px; border-radius: 5px; background: #808080; margin: 18px auto 0; }
    svg { display: block; }
    </style>
    <div class="bar">
      <div class="index"><b>3876.34</b><div><i>上证</i><span>0.37%</span></div></div>
      <button class="buy">买</button><button class="sell">卖</button>
      <div class="tools">
        <tool-button><span slot="icon" style="font-size:53px;font-weight:500">撤</span>撤单</tool-button>
        <tool-button><svg slot="icon" width="56" height="62" fill="none" stroke="#2b2b2b" stroke-width="4" stroke-linejoin="round"><path d="M28 3.500q2 0 4 1l18 10.500q3 2 3 5v22q0 3-3 5L32 57.500q-4 2-8 0L6 47q-3-2-3-5V20q0-3 3-5L24 4.500q2-1 4-1z"/><circle cx="28" cy="31" r="9"/></svg>设自选</tool-button>
        <tool-button style="width:124px"><svg slot="icon" width="48" height="16" fill="#2b2b2b"><circle cx="6" cy="10" r="4.700"/><circle cx="24" cy="10" r="4.700"/><circle cx="42" cy="10" r="4.700"/></svg>更多</tool-button>
      </div>
    </div>
    <div class="home"></div>
`)
//#endregion TRADE BAR

define("stock-app", /*html*/`
    <style>
    :host { display: flex; flex-direction: column; width: 1080px; height: 2408px; }
    :host > * { flex: none; }
    .kinds { --tab: 159.500px; }
    .tri { border: solid transparent; border-width: 12px 7px 0; border-top-color: #666; margin: -4px -24px 0 10px; }
    .gear { width: 123px; display: flex; align-items: center; justify-content: center; }
    .news { --tab: 146.500px; border-top: 2px solid #d9d9d9; padding-left: 26px; height: 105px; }
    </style>
    <status-bar></status-bar>
    <stock-header></stock-header>
    <quote-panel></quote-panel>
    <tab-strip class="kinds">
      <tab-item>分时</tab-item><tab-item>五日</tab-item><tab-item>日K</tab-item><tab-item active>周K</tab-item><tab-item>月K</tab-item><tab-item>更多<span class="tri"></span></tab-item>
      <span class="gear"><svg width="54" height="54" viewBox="-27 -27 54 54" fill="none" stroke="#666" stroke-width="4" stroke-linejoin="round"><path d="M-5-24H5L7-17 13-13.500 20-15.500 25-7 20-1.500V1.500L25 7 20 15.500 13 13.500 7 17 5 24H-5L-7 17-13 13.500-20 15.500-25 7-20 1.500V-1.500L-25-7-20-15.500-13-13.500-7-17z"/><circle r="8.500"/></svg></span>
    </tab-strip>
    <ma-legend></ma-legend>
    <candle-chart></candle-chart>
    <volume-legend></volume-legend>
    <volume-chart></volume-chart>
    <promo-banner>股票账户选靓号，为你投资添好运！</promo-banner>
    <tab-strip class="news">
      <tab-item active>股吧</tab-item><tab-item>盘口</tab-item><tab-item>资讯</tab-item><tab-item>公告</tab-item><tab-item>研报</tab-item><tab-item>财务</tab-item><tab-item>资料</tab-item>
    </tab-strip>
    <feed-cards></feed-cards>
    <trade-bar></trade-bar>
`)
</script>
</body>
</html>
